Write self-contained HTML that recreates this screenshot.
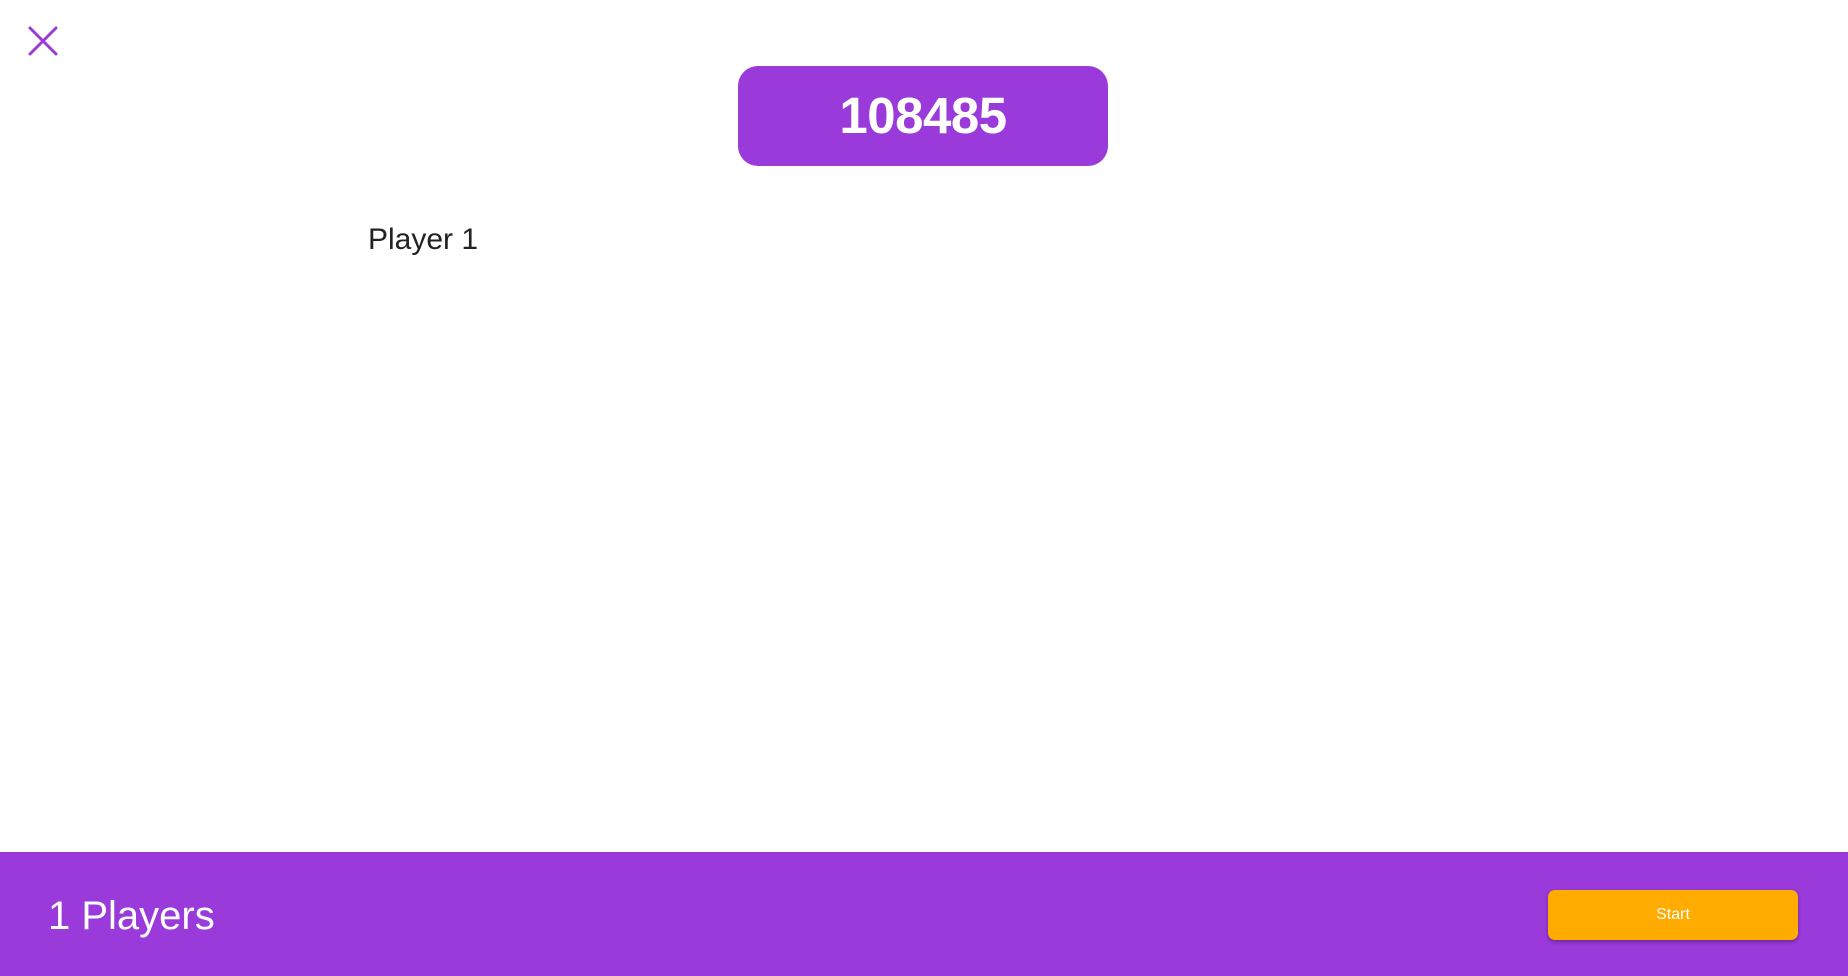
<!DOCTYPE html>
<html><head><meta charset="utf-8"><style>
html,body{margin:0;padding:0;width:1848px;height:976px;overflow:hidden;background:#fff;font-family:"Liberation Sans",Arial,sans-serif;position:relative}
.x{position:absolute;left:28px;top:26px}
.badge{position:absolute;left:738px;top:66px;width:370px;height:100px;background:#9a3adb;border-radius:20px;color:#fff;font-weight:bold;font-size:51px;text-align:center;line-height:100px;letter-spacing:-0.5px}
.p1{position:absolute;left:368px;top:223px;font-size:30px;color:#222;line-height:34px}
.foot{position:absolute;left:0;top:852px;width:1848px;height:124px;background:#9a3adb}
.cnt{position:absolute;left:48px;top:892px;font-size:40px;color:#fff;line-height:48px}
.btn{position:absolute;left:1548px;top:890px;width:250px;height:50px;background:#ffab00;border-radius:7px;box-shadow:0 2px 4px rgba(0,0,0,.3);color:#fff;font-size:16px;line-height:50px;text-align:center}
</style></head><body>
<svg class="x" width="30" height="30" viewBox="0 0 30 30"><path d="M2 2L28 28M28 2L2 28" stroke="#9a3adb" stroke-width="3" stroke-linecap="round"/></svg>
<div class="badge">108485</div>
<div class="p1">Player 1</div>
<div class="foot"></div>
<div class="cnt">1 Players</div>
<div class="btn">Start</div>
</body></html>
